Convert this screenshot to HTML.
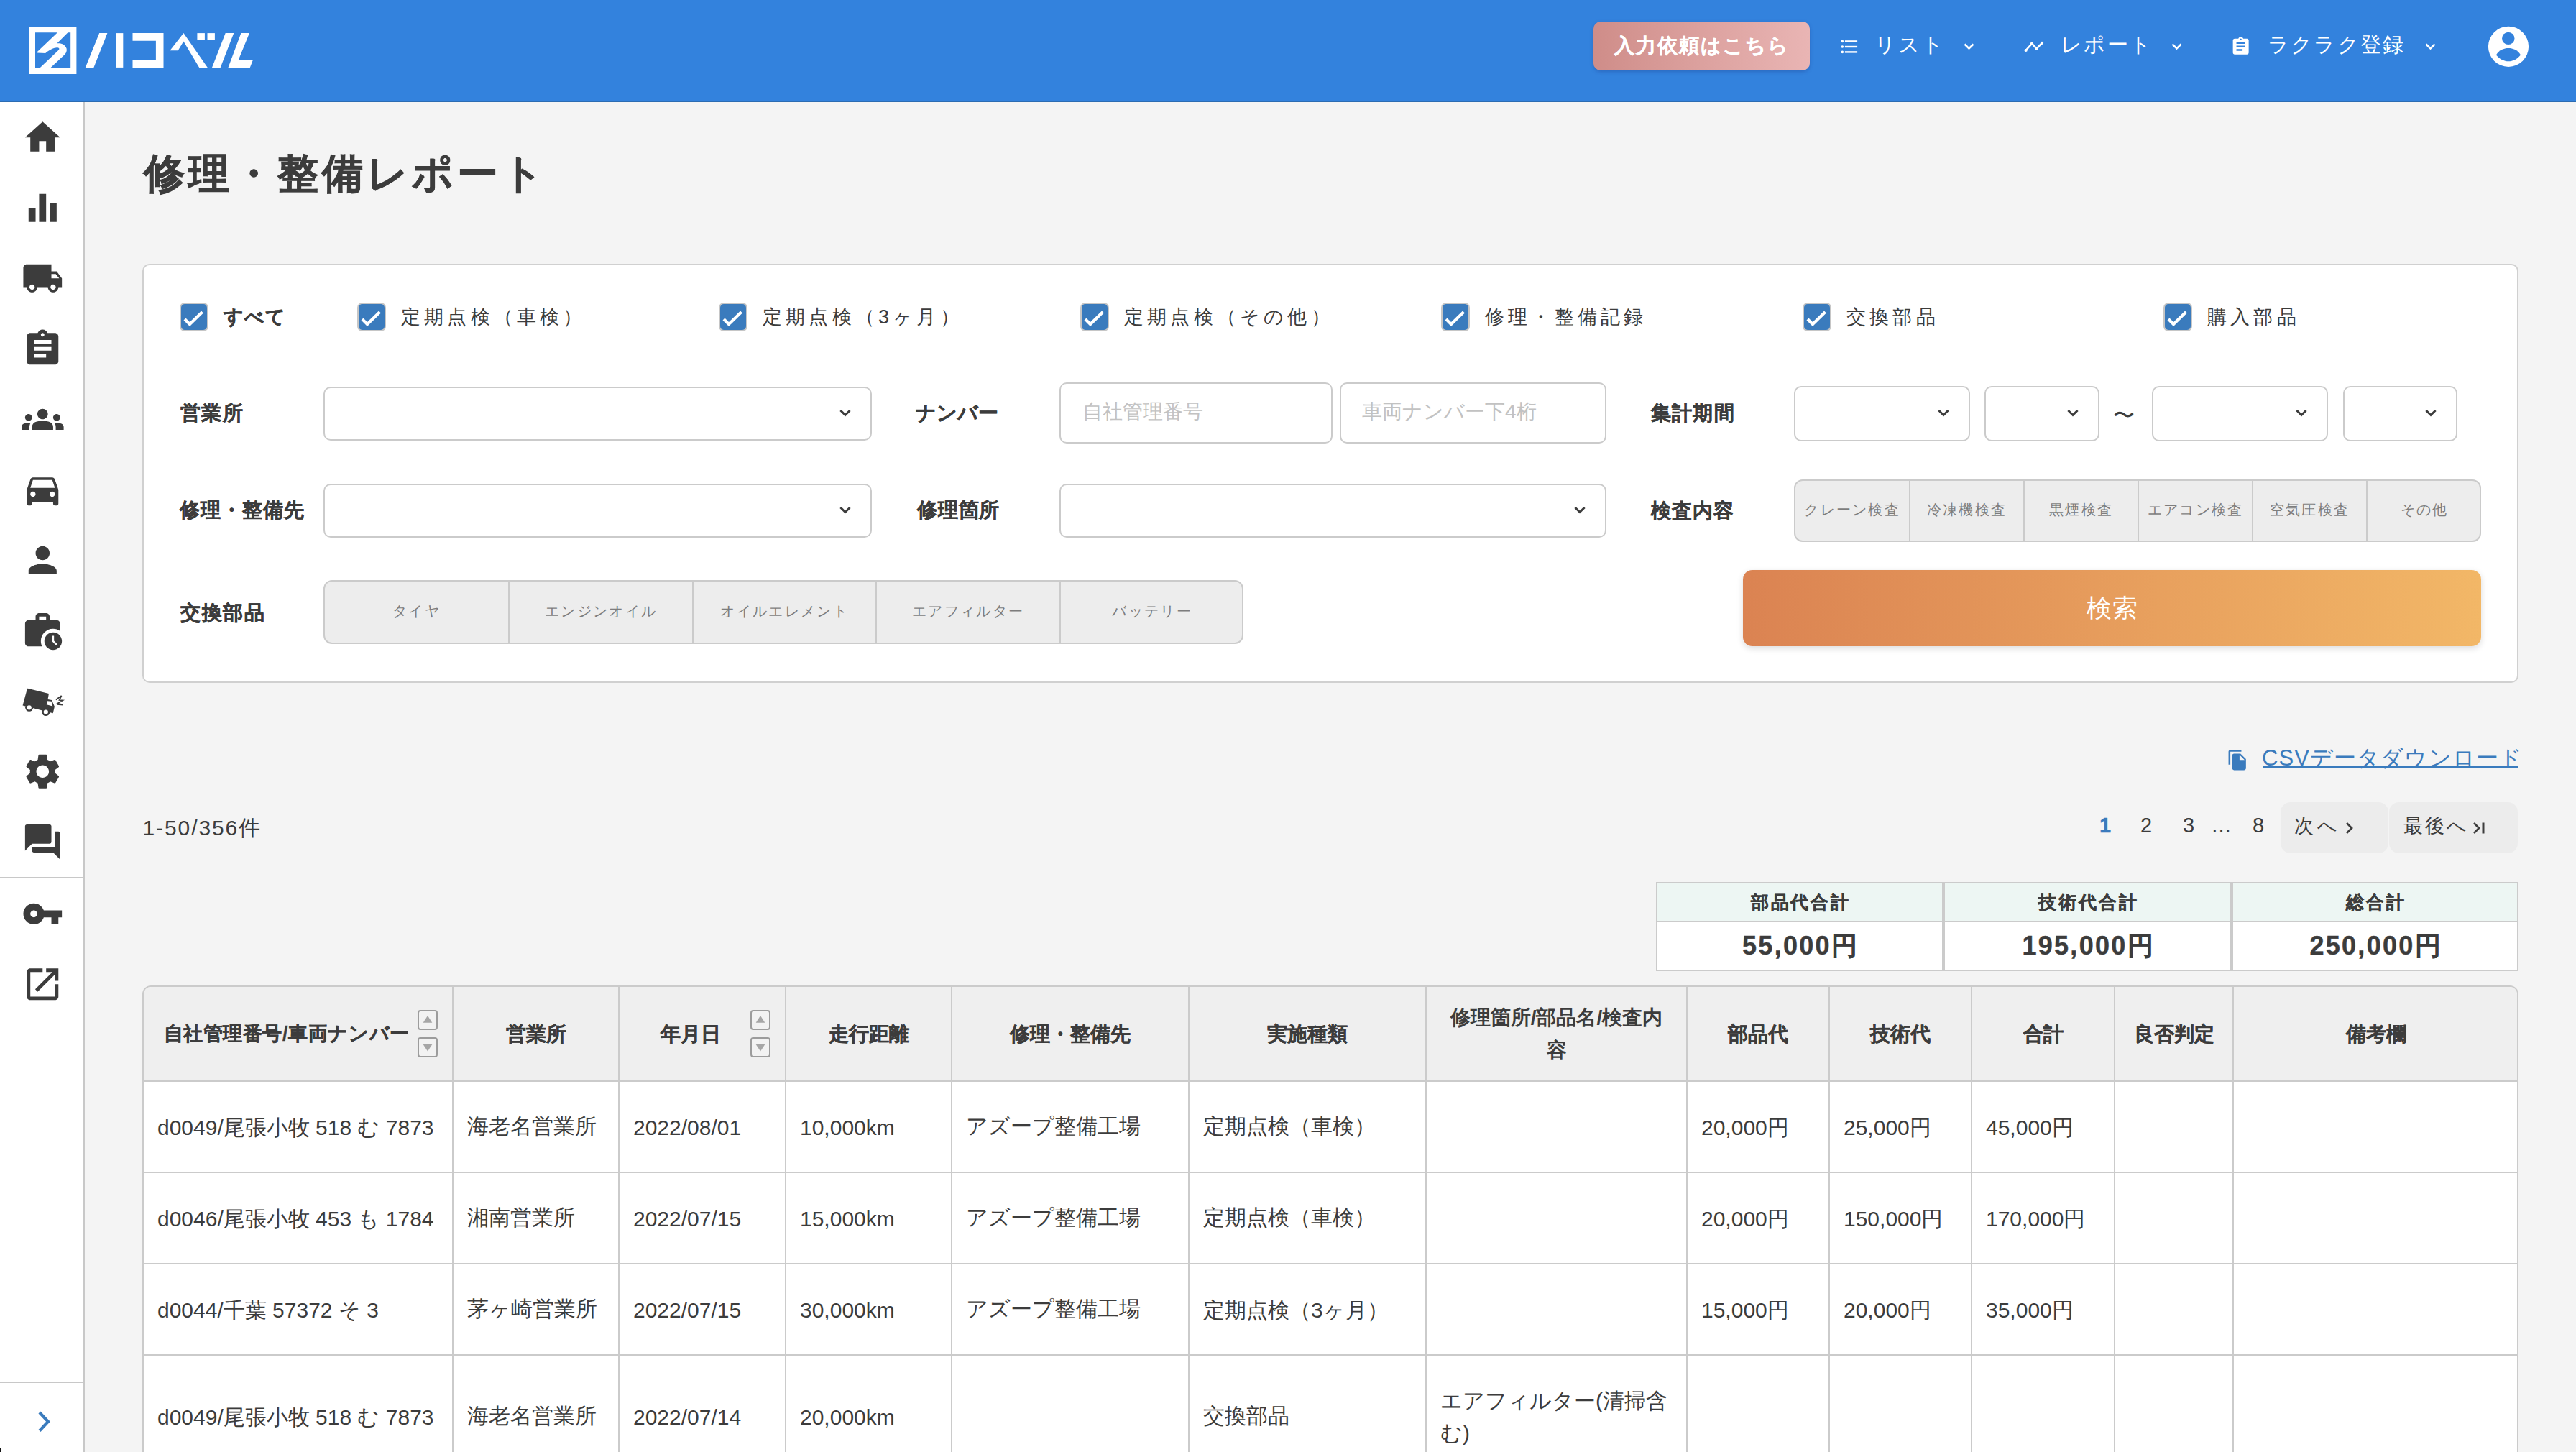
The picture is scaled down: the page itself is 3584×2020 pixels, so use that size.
<!DOCTYPE html>
<html lang="ja"><head><meta charset="utf-8"><title>修理・整備レポート</title>
<style>
*{box-sizing:border-box;margin:0;padding:0}
html,body{width:3584px;height:2020px;overflow:hidden;background:#f4f4f4;font-family:"Liberation Sans",sans-serif;color:#3c3c3c}
.a{position:absolute;white-space:nowrap}
.b{-webkit-text-stroke:0.012em currentColor}
svg.a{overflow:visible}
@media (max-width:1800px){html{zoom:.5}}
</style></head><body>

<div class="a" style="left:0px;top:0px;width:3584px;height:140px;background:#3382dd"></div>
<div class="a" style="left:0px;top:140px;width:3584px;height:2px;background:#2c6cb2"></div>
<svg class="a" style="left:0px;top:0px;" width="400" height="140" viewBox="0 0 400 140"><g fill="#fff">
<path fill-rule="evenodd" d="M40.2,37H106.4V103H40.2ZM49,45.3V94.8H98.2V45.3Z"/>
<path d="M81.3,44 L95.7,44 L79.4,60.3 C85,59.5 91,62 92.6,67.5 C93.5,71 92,74.5 88.3,77.5 L68.5,96 L53.8,96 L81.5,69.7 C83.5,67.5 82,66.2 78.9,66.3 C75,66.5 71,68 63.2,73.9 L52.2,73.4 L51.7,72.3 Z"/>
<polygon points="118.8,93.9 130.4,93.9 149.4,46.1 138.2,46.1"/>
<polygon points="161.0,46.1 171.3,46.1 171.3,93.9 161.0,93.9"/>
<polygon points="184.5,46.1 227.5,46.1 227.5,93.9 184.5,93.9 184.5,83.5 216.9,83.5 216.9,56.7 184.5,56.7"/>
<polygon points="236.5,70.2 255.4,46.1 288.8,93.9 277.2,93.9 255.4,57.5 247.7,70.2"/>
<polygon points="274.4,46.1 284.9,46.1 284.9,55.4 274.4,55.4"/>
<polygon points="288.5,46.1 298.9,46.1 298.9,55.4 288.5,55.4"/>
<polygon points="295.0,93.9 306.7,93.9 325.3,46.1 313.7,46.1"/>
<polygon points="317.5,93.9 347.8,93.9 351.7,83.9 331.5,83.9 347.0,46.1 335.4,46.1"/>
</g></svg>
<div class="a" style="left:2217px;top:30px;width:301px;height:68px;border-radius:10px;background:linear-gradient(90deg,#cf8d89,#e9b5b4);box-shadow:0 2px 5px rgba(30,60,140,.35)"></div>
<div class="a b" style="left:2217px;top:30px;font-size:28px;line-height:68px;color:#fff;font-weight:bold;letter-spacing:2px;width:301px;text-align:center;">入力依頼はこちら</div>
<svg class="a" style="left:2550px;top:40px;" width="60" height="50" viewBox="0 0 60 50"><g fill="#fff"><circle cx="13.3" cy="17.4" r="1.8"/><circle cx="13.3" cy="25" r="1.8"/><circle cx="13.3" cy="32.4" r="1.8"/><rect x="16.9" y="16.2" width="17.2" height="2.4"/><rect x="16.9" y="23.8" width="17.2" height="2.4"/><rect x="16.9" y="31.2" width="17.2" height="2.4"/></g></svg>
<div class="a" style="left:2608px;top:44px;font-size:29px;line-height:36px;color:#fff;font-weight:normal;letter-spacing:3px;">リスト</div>
<svg class="a" style="left:2732px;top:60px;" width="15" height="9" viewBox="0 0 15 9"><polyline points="1.5,1.5 7.5,7.5 13.5,1.5" fill="none" stroke="#fff" stroke-width="2.6"/></svg>
<svg class="a" style="left:2805px;top:40px;" width="60" height="50" viewBox="0 0 60 50"><g fill="#fff" stroke="#fff"><polyline points="13.6,30 22,20.7 28.6,27.6 36,19.8" fill="none" stroke-width="2.6"/><circle cx="13.6" cy="30" r="2.1" stroke="none"/><circle cx="22" cy="20.7" r="2.1" stroke="none"/><circle cx="28.6" cy="27.6" r="2.1" stroke="none"/><circle cx="36" cy="19.8" r="2.1" stroke="none"/></g></svg>
<div class="a" style="left:2867px;top:44px;font-size:29px;line-height:36px;color:#fff;font-weight:normal;letter-spacing:2.3px;">レポート</div>
<svg class="a" style="left:3021px;top:60px;" width="15" height="9" viewBox="0 0 15 9"><polyline points="1.5,1.5 7.5,7.5 13.5,1.5" fill="none" stroke="#fff" stroke-width="2.6"/></svg>
<svg class="a" style="left:3103.3px;top:49.8px;" width="29.3" height="29.3" viewBox="0 0 24 24"><path fill="#fff" d="M19 3h-4.18C14.4 1.84 13.3 1 12 1c-1.3 0-2.4.84-2.82 2H5c-1.1 0-2 .9-2 2v14c0 1.1.9 2 2 2h14c1.1 0 2-.9 2-2V5c0-1.1-.9-2-2-2zm-7 0c.55 0 1 .45 1 1s-.45 1-1 1-1-.45-1-1 .45-1 1-1zm2 14H7v-2h7v2zm3-4H7v-2h10v2zm0-4H7V7h10v2z"/></svg>
<div class="a" style="left:3155px;top:44px;font-size:29px;line-height:36px;color:#fff;font-weight:normal;letter-spacing:2.2px;">ラクラク登録</div>
<svg class="a" style="left:3374px;top:60px;" width="15" height="9" viewBox="0 0 15 9"><polyline points="1.5,1.5 7.5,7.5 13.5,1.5" fill="none" stroke="#fff" stroke-width="2.6"/></svg>
<svg class="a" style="left:3450px;top:25px;" width="80" height="80" viewBox="0 0 80 80"><circle cx="40" cy="39.8" r="28.1" fill="#fff"/><circle cx="39.8" cy="28.4" r="8.7" fill="#3382dd"/><path d="M22.9,51.5 C27,44.5 34,42.1 40,42.1 C46,42.1 53,44.5 57,51.5 C52,57.5 46,60.3 40,60.3 C34,60.3 28,57.5 22.9,51.5Z" fill="#3382dd"/></svg>
<div class="a" style="left:0px;top:142px;width:116px;height:1878px;background:#fff"></div>
<div class="a" style="left:116px;top:142px;width:2px;height:1878px;background:#c8c8c8"></div>
<svg class="a" style="left:30px;top:162px;" width="58.6" height="58.6" viewBox="0 0 24 24"><path fill="#3c3c3c" d="M10 20v-6h4v6h5v-8h3L12 3 2 12h3v8z"/></svg>
<svg class="a" style="left:30px;top:260px;" width="58.6" height="58.6" viewBox="0 0 24 24"><path fill="#3c3c3c" d="M10 20h4V4h-4v16zm-6 0h4v-8H4v8zM16 9v11h4V9h-4z"/></svg>
<svg class="a" style="left:30px;top:358px;" width="58.6" height="58.6" viewBox="0 0 24 24"><path fill="#3c3c3c" d="M20 8h-3V4H3c-1.1 0-2 .9-2 2v11h2c0 1.66 1.34 3 3 3s3-1.34 3-3h6c0 1.66 1.34 3 3 3s3-1.34 3-3h2v-5l-3-4zM6 18.5c-.83 0-1.5-.67-1.5-1.5s.67-1.5 1.5-1.5 1.5.67 1.5 1.5-.67 1.5-1.5 1.5zm13.5-9l1.96 2.5H17V9.5h2.5zm-1.5 9c-.83 0-1.5-.67-1.5-1.5s.67-1.5 1.5-1.5 1.5.67 1.5 1.5-.67 1.5-1.5 1.5z"/></svg>
<svg class="a" style="left:30px;top:456px;" width="58.6" height="58.6" viewBox="0 0 24 24"><path fill="#3c3c3c" d="M19 3h-4.18C14.4 1.84 13.3 1 12 1c-1.3 0-2.4.84-2.82 2H5c-1.1 0-2 .9-2 2v14c0 1.1.9 2 2 2h14c1.1 0 2-.9 2-2V5c0-1.1-.9-2-2-2zm-7 0c.55 0 1 .45 1 1s-.45 1-1 1-1-.45-1-1 .45-1 1-1zm2 14H7v-2h7v2zm3-4H7v-2h10v2zm0-4H7V7h10v2z"/></svg>
<svg class="a" style="left:30px;top:554px;" width="58.6" height="58.6" viewBox="0 0 24 24"><path fill="#3c3c3c" d="M12 12.75c1.63 0 3.07.39 4.24.9 1.08.48 1.76 1.56 1.76 2.73V18H6v-1.61c0-1.18.68-2.26 1.760-2.73 1.17-.52 2.61-.91 4.24-.91zM4 13c1.1 0 2-.9 2-2s-.9-2-2-2-2 .9-2 2 .9 2 2 2zm1.13 1.1c-.37-.06-.74-.1-1.13-.1-.99 0-1.930.21-2.78.58C.48 14.9 0 15.62 0 16.43V18h4.5v-1.61c0-.83.23-1.61.63-2.29zM20 13c1.1 0 2-.9 2-2s-.9-2-2-2-2 .9-2 2 .9 2 2 2zm4 3.43c0-.81-.48-1.53-1.22-1.85-.85-.37-1.79-.58-2.78-.58-.39 0-.76.04-1.13.1.4.68.63 1.46.63 2.29V18H24v-1.57zM12 6c1.66 0 3 1.34 3 3s-1.34 3-3 3-3-1.34-3-3 1.34-3 3-3z"/></svg>
<svg class="a" style="left:30px;top:652px;" width="58.6" height="58.6" viewBox="0 0 24 24"><path fill="#3c3c3c" d="M18.92 6.01C18.72 5.42 18.16 5 17.5 5h-11c-.66 0-1.21.42-1.42 1.01L3 12v8c0 .55.45 1 1 1h1c.55 0 1-.45 1-1v-1h12v1c0 .55.45 1 1 1h1c.55 0 1-.45 1-1v-8l-2.08-5.99zM6.5 16c-.83 0-1.5-.67-1.5-1.5S5.67 13 6.5 13s1.5.67 1.5 1.5S7.33 16 6.5 16zm11 0c-.83 0-1.5-.67-1.5-1.5s.67-1.5 1.5-1.5 1.5.67 1.5 1.5-.67 1.5-1.5 1.5zM5 11l1.5-4.5h11L19 11H5z"/></svg>
<svg class="a" style="left:30px;top:750px;" width="58.6" height="58.6" viewBox="0 0 24 24"><path fill="#3c3c3c" d="M12 12c2.21 0 4-1.79 4-4s-1.79-4-4-4-4 1.79-4 4 1.79 4 4 4zm0 2c-2.67 0-8 1.34-8 4v2h16v-2c0-2.66-5.330-4-8-4z"/></svg>
<svg class="a" style="left:30px;top:848px;" width="58.6" height="58.6" viewBox="0 0 24 24"><path fill="#3c3c3c" d="M18 11c1.49 0 2.87.47 4 1.26V8c0-1.11-.89-2-2-2h-4V4c0-1.11-.89-2-2-2h-4c-1.11 0-2 .89-2 2v2H4c-1.11 0-1.99.89-1.99 2L2 19c0 1.11.89 2 2 2h7.68c-.43-.91-.68-1.92-.68-3 0-3.87 3.13-7 7-7zm-8-7h4v2h-4V4zM18 13c-2.76 0-5 2.24-5 5s2.24 5 5 5 5-2.24 5-5-2.24-5-5-5zm1.65 7.35L17.5 18.2V15h1v2.79l1.85 1.85-.7.71z"/></svg>
<svg class="a" style="left:20px;top:930px;" width="80" height="80" viewBox="0 0 1452 1452"><g fill="#3c3c3c"><path d="M340,505 L870,635 L845,782 L945,800 L1015,962 L975,1132 L210,935 L320,530 Q325,500 340,505Z"/>
<circle cx="375" cy="985" r="100"/><circle cx="795" cy="1100" r="100"/></g>
<circle cx="375" cy="985" r="57" fill="#fff"/><circle cx="795" cy="1100" r="57" fill="#fff"/>
<path d="M832,822 L935,832 L967,955 L812,912Z" fill="#fff"/>
<polyline points="1050,790 1190,690 1135,800 1222,806 1095,880 1228,918 1075,905" fill="none" stroke="#3c3c3c" stroke-width="30" stroke-linejoin="miter"/></svg>
<svg class="a" style="left:30px;top:1044px;" width="58.6" height="58.6" viewBox="0 0 24 24"><path fill="#3c3c3c" d="M19.14 12.94c.04-.3.06-.61.06-.94 0-.32-.02-.64-.07-.94l2.03-1.58c.18-.14.23-.41.12-.61l-1.92-3.32c-.12-.22-.37-.29-.59-.22l-2.39.96c-.5-.38-1.03-.7-1.62-.94l-.36-2.54c-.04-.24-.24-.41-.48-.41h-3.84c-.24 0-.43.17-.47.41l-.36 2.54c-.59.24-1.13.57-1.62.94l-2.39-.96c-.22-.08-.47 0-.59.22L2.74 8.87c-.12.21-.08.47.12.61l2.03 1.58c-.05.3-.09.63-.09.94s.02.64.07.94l-2.03 1.58c-.18.14-.23.41-.12.61l1.92 3.32c.12.22.37.29.59.22l2.39-.96c.5.38 1.03.7 1.62.94l.36 2.54c.05.24.24.41.48.41h3.84c.24 0 .44-.17.47-.41l.36-2.54c.59-.24 1.13-.56 1.62-.94l2.39.96c.22.08.47 0 .59-.22l1.92-3.32c.12-.22.07-.47-.12-.61l-2.01-1.58zM12 15.6c-1.98 0-3.6-1.62-3.6-3.6s1.62-3.6 3.6-3.6 3.6 1.62 3.6 3.6-1.62 3.6-3.6 3.6z"/></svg>
<svg class="a" style="left:30px;top:1142px;" width="58.6" height="58.6" viewBox="0 0 24 24"><path fill="#3c3c3c" d="M21 6h-2v9H6v2c0 .55.45 1 1 1h11l4 4V7c0-.55-.45-1-1-1zm-4 6V3c0-.55-.45-1-1-1H3c-.55 0-1 .45-1 1v14l4-4h10c.55 0 1-.45 1-1z"/></svg>
<div class="a" style="left:0px;top:1220px;width:116px;height:2px;background:#c8c8c8"></div>
<svg class="a" style="left:30px;top:1242px;" width="58.6" height="58.6" viewBox="0 0 24 24"><path fill="#3c3c3c" d="M12.65 10C11.83 7.67 9.61 6 7 6c-3.31 0-6 2.69-6 6s2.69 6 6 6c2.61 0 4.83-1.67 5.65-4H17v4h4v-4h2v-4H12.65zM7 14c-1.1 0-2-.9-2-2s.9-2 2-2 2 .9 2 2-.9 2-2 2z"/></svg>
<svg class="a" style="left:30px;top:1340px;" width="58.6" height="58.6" viewBox="0 0 24 24"><path fill="#3c3c3c" d="M19 19H5V5h7V3H5c-1.11 0-2 .9-2 2v14c0 1.1.89 2 2 2h14c1.1 0 2-.9 2-2v-7h-2v7zM14 3v2h3.59l-9.83 9.83 1.41 1.41L19 6.41V10h2V3h-7z"/></svg>
<div class="a" style="left:0px;top:1922px;width:116px;height:2px;background:#c8c8c8"></div>
<svg class="a" style="left:50px;top:1960px;" width="24" height="36" viewBox="0 0 24 36"><polyline points="5,5 17,17.8 5,30.5" fill="none" stroke="#3a7bbd" stroke-width="4.2"/></svg>
<div class="a b" style="left:200px;top:206.5px;font-size:57px;line-height:68px;color:#3c3c3c;font-weight:bold;letter-spacing:5px;">修理・整備レポート</div>
<div class="a" style="left:198px;top:367px;width:3306px;height:583px;background:#fff;border:2px solid #d0d0d0;border-radius:10px"></div>
<div class="a" style="left:250px;top:421px;width:40px;height:40px;background:#3a7bbd;border:2px solid #c6c6c6;border-radius:7px"></div>
<svg class="a" style="left:250px;top:421px;" width="40" height="40" viewBox="0 0 40 40"><polyline points="7,23 14,30 31.5,13" fill="none" stroke="#fff" stroke-width="4.2"/></svg>
<div class="a b" style="left:311px;top:423px;font-size:27px;line-height:36px;color:#3c3c3c;font-weight:bold;letter-spacing:1px;">すべて</div>
<div class="a" style="left:497px;top:421px;width:40px;height:40px;background:#3a7bbd;border:2px solid #c6c6c6;border-radius:7px"></div>
<svg class="a" style="left:497px;top:421px;" width="40" height="40" viewBox="0 0 40 40"><polyline points="7,23 14,30 31.5,13" fill="none" stroke="#fff" stroke-width="4.2"/></svg>
<div class="a" style="left:558px;top:423px;font-size:27px;line-height:36px;color:#3c3c3c;font-weight:normal;letter-spacing:5.2px;">定期点検（車検）</div>
<div class="a" style="left:1000px;top:421px;width:40px;height:40px;background:#3a7bbd;border:2px solid #c6c6c6;border-radius:7px"></div>
<svg class="a" style="left:1000px;top:421px;" width="40" height="40" viewBox="0 0 40 40"><polyline points="7,23 14,30 31.5,13" fill="none" stroke="#fff" stroke-width="4.2"/></svg>
<div class="a" style="left:1061px;top:423px;font-size:27px;line-height:36px;color:#3c3c3c;font-weight:normal;letter-spacing:5.2px;">定期点検（3ヶ月）</div>
<div class="a" style="left:1503px;top:421px;width:40px;height:40px;background:#3a7bbd;border:2px solid #c6c6c6;border-radius:7px"></div>
<svg class="a" style="left:1503px;top:421px;" width="40" height="40" viewBox="0 0 40 40"><polyline points="7,23 14,30 31.5,13" fill="none" stroke="#fff" stroke-width="4.2"/></svg>
<div class="a" style="left:1564px;top:423px;font-size:27px;line-height:36px;color:#3c3c3c;font-weight:normal;letter-spacing:5.2px;">定期点検（その他）</div>
<div class="a" style="left:2005px;top:421px;width:40px;height:40px;background:#3a7bbd;border:2px solid #c6c6c6;border-radius:7px"></div>
<svg class="a" style="left:2005px;top:421px;" width="40" height="40" viewBox="0 0 40 40"><polyline points="7,23 14,30 31.5,13" fill="none" stroke="#fff" stroke-width="4.2"/></svg>
<div class="a" style="left:2066px;top:423px;font-size:27px;line-height:36px;color:#3c3c3c;font-weight:normal;letter-spacing:5.2px;">修理・整備記録</div>
<div class="a" style="left:2508px;top:421px;width:40px;height:40px;background:#3a7bbd;border:2px solid #c6c6c6;border-radius:7px"></div>
<svg class="a" style="left:2508px;top:421px;" width="40" height="40" viewBox="0 0 40 40"><polyline points="7,23 14,30 31.5,13" fill="none" stroke="#fff" stroke-width="4.2"/></svg>
<div class="a" style="left:2569px;top:423px;font-size:27px;line-height:36px;color:#3c3c3c;font-weight:normal;letter-spacing:5.2px;">交換部品</div>
<div class="a" style="left:3010px;top:421px;width:40px;height:40px;background:#3a7bbd;border:2px solid #c6c6c6;border-radius:7px"></div>
<svg class="a" style="left:3010px;top:421px;" width="40" height="40" viewBox="0 0 40 40"><polyline points="7,23 14,30 31.5,13" fill="none" stroke="#fff" stroke-width="4.2"/></svg>
<div class="a" style="left:3071px;top:423px;font-size:27px;line-height:36px;color:#3c3c3c;font-weight:normal;letter-spacing:5.2px;">購入部品</div>
<div class="a b" style="left:251.4px;top:556px;font-size:28px;line-height:38px;color:#3c3c3c;font-weight:bold;letter-spacing:1.1px;">営業所</div>
<div class="a" style="left:450px;top:538px;width:763px;height:75px;background:#fff;border:2px solid #cbcbcb;border-radius:10px"></div>
<svg class="a" style="left:1168px;top:569.0px;" width="16" height="13" viewBox="0 0 16 13"><polyline points="2.5,3 8,8.5 13.5,3" fill="none" stroke="#3c3c3c" stroke-width="3" stroke-linecap="square"/></svg>
<div class="a b" style="left:1274px;top:556px;font-size:28px;line-height:38px;color:#3c3c3c;font-weight:bold;letter-spacing:0px;">ナンバー</div>
<div class="a" style="left:1474px;top:532px;width:380px;height:85px;background:#fff;border:2px solid #cbcbcb;border-radius:10px"></div>
<div class="a" style="left:1506px;top:554px;font-size:28px;line-height:38px;color:#c2c2c2;font-weight:normal;letter-spacing:0px;">自社管理番号</div>
<div class="a" style="left:1864px;top:532px;width:371px;height:85px;background:#fff;border:2px solid #cbcbcb;border-radius:10px"></div>
<div class="a" style="left:1895px;top:554px;font-size:28px;line-height:38px;color:#c2c2c2;font-weight:normal;letter-spacing:0px;">車両ナンバー下4桁</div>
<div class="a b" style="left:2297px;top:556px;font-size:28px;line-height:38px;color:#3c3c3c;font-weight:bold;letter-spacing:1.2px;">集計期間</div>
<div class="a" style="left:2496px;top:537px;width:245px;height:77px;background:#fff;border:2px solid #cbcbcb;border-radius:10px"></div>
<svg class="a" style="left:2696px;top:569.0px;" width="16" height="13" viewBox="0 0 16 13"><polyline points="2.5,3 8,8.5 13.5,3" fill="none" stroke="#3c3c3c" stroke-width="3" stroke-linecap="square"/></svg>
<div class="a" style="left:2761px;top:537px;width:160px;height:77px;background:#fff;border:2px solid #cbcbcb;border-radius:10px"></div>
<svg class="a" style="left:2876px;top:569.0px;" width="16" height="13" viewBox="0 0 16 13"><polyline points="2.5,3 8,8.5 13.5,3" fill="none" stroke="#3c3c3c" stroke-width="3" stroke-linecap="square"/></svg>
<div class="a" style="left:2940px;top:558px;font-size:30px;line-height:40px;color:#3c3c3c;font-weight:normal;letter-spacing:0px;">〜</div>
<div class="a" style="left:2994px;top:537px;width:245px;height:77px;background:#fff;border:2px solid #cbcbcb;border-radius:10px"></div>
<svg class="a" style="left:3194px;top:569.0px;" width="16" height="13" viewBox="0 0 16 13"><polyline points="2.5,3 8,8.5 13.5,3" fill="none" stroke="#3c3c3c" stroke-width="3" stroke-linecap="square"/></svg>
<div class="a" style="left:3260px;top:537px;width:159px;height:77px;background:#fff;border:2px solid #cbcbcb;border-radius:10px"></div>
<svg class="a" style="left:3374px;top:569.0px;" width="16" height="13" viewBox="0 0 16 13"><polyline points="2.5,3 8,8.5 13.5,3" fill="none" stroke="#3c3c3c" stroke-width="3" stroke-linecap="square"/></svg>
<div class="a b" style="left:250px;top:691px;font-size:28px;line-height:38px;color:#3c3c3c;font-weight:bold;letter-spacing:1px;">修理・整備先</div>
<div class="a" style="left:450px;top:673px;width:763px;height:75px;background:#fff;border:2px solid #cbcbcb;border-radius:10px"></div>
<svg class="a" style="left:1168px;top:704.0px;" width="16" height="13" viewBox="0 0 16 13"><polyline points="2.5,3 8,8.5 13.5,3" fill="none" stroke="#3c3c3c" stroke-width="3" stroke-linecap="square"/></svg>
<div class="a b" style="left:1276px;top:691px;font-size:28px;line-height:38px;color:#3c3c3c;font-weight:bold;letter-spacing:0.8px;">修理箇所</div>
<div class="a" style="left:1474px;top:673px;width:761px;height:75px;background:#fff;border:2px solid #cbcbcb;border-radius:10px"></div>
<svg class="a" style="left:2190px;top:704.0px;" width="16" height="13" viewBox="0 0 16 13"><polyline points="2.5,3 8,8.5 13.5,3" fill="none" stroke="#3c3c3c" stroke-width="3" stroke-linecap="square"/></svg>
<div class="a b" style="left:2297px;top:692px;font-size:28px;line-height:38px;color:#3c3c3c;font-weight:bold;letter-spacing:1px;">検査内容</div>
<div class="a" style="left:2496px;top:667px;width:956px;height:87px;background:#ededed;border:2px solid #cbcbcb;border-radius:12px"></div>
<div class="a" style="left:2656px;top:667px;width:2px;height:87px;background:#cbcbcb"></div>
<div class="a" style="left:2815px;top:667px;width:2px;height:87px;background:#cbcbcb"></div>
<div class="a" style="left:2974px;top:667px;width:2px;height:87px;background:#cbcbcb"></div>
<div class="a" style="left:3133px;top:667px;width:2px;height:87px;background:#cbcbcb"></div>
<div class="a" style="left:3292px;top:667px;width:2px;height:87px;background:#cbcbcb"></div>
<div class="a" style="left:2496px;top:665.5px;font-size:20px;line-height:87px;color:#7d7d7d;font-weight:normal;letter-spacing:2.3px;width:160px;text-align:center;padding-left:2.3px;">クレーン検査</div>
<div class="a" style="left:2656px;top:665.5px;font-size:20px;line-height:87px;color:#7d7d7d;font-weight:normal;letter-spacing:2.3px;width:159px;text-align:center;padding-left:2.3px;">冷凍機検査</div>
<div class="a" style="left:2815px;top:665.5px;font-size:20px;line-height:87px;color:#7d7d7d;font-weight:normal;letter-spacing:2.3px;width:159px;text-align:center;padding-left:2.3px;">黒煙検査</div>
<div class="a" style="left:2974px;top:665.5px;font-size:20px;line-height:87px;color:#7d7d7d;font-weight:normal;letter-spacing:2.3px;width:159px;text-align:center;padding-left:2.3px;">エアコン検査</div>
<div class="a" style="left:3133px;top:665.5px;font-size:20px;line-height:87px;color:#7d7d7d;font-weight:normal;letter-spacing:2.3px;width:159px;text-align:center;padding-left:2.3px;">空気圧検査</div>
<div class="a" style="left:3292px;top:665.5px;font-size:20px;line-height:87px;color:#7d7d7d;font-weight:normal;letter-spacing:2.3px;width:160px;text-align:center;padding-left:2.3px;">その他</div>
<div class="a b" style="left:251px;top:834px;font-size:28px;line-height:38px;color:#3c3c3c;font-weight:bold;letter-spacing:1.5px;">交換部品</div>
<div class="a" style="left:450px;top:807px;width:1280px;height:89px;background:#ededed;border:2px solid #cbcbcb;border-radius:12px"></div>
<div class="a" style="left:707px;top:807px;width:2px;height:89px;background:#cbcbcb"></div>
<div class="a" style="left:963px;top:807px;width:2px;height:89px;background:#cbcbcb"></div>
<div class="a" style="left:1218px;top:807px;width:2px;height:89px;background:#cbcbcb"></div>
<div class="a" style="left:1474px;top:807px;width:2px;height:89px;background:#cbcbcb"></div>
<div class="a" style="left:450px;top:805.5px;font-size:20px;line-height:89px;color:#7d7d7d;font-weight:normal;letter-spacing:2.3px;width:257px;text-align:center;padding-left:2.3px;">タイヤ</div>
<div class="a" style="left:707px;top:805.5px;font-size:20px;line-height:89px;color:#7d7d7d;font-weight:normal;letter-spacing:2.3px;width:256px;text-align:center;padding-left:2.3px;">エンジンオイル</div>
<div class="a" style="left:963px;top:805.5px;font-size:20px;line-height:89px;color:#7d7d7d;font-weight:normal;letter-spacing:2.3px;width:255px;text-align:center;padding-left:2.3px;">オイルエレメント</div>
<div class="a" style="left:1218px;top:805.5px;font-size:20px;line-height:89px;color:#7d7d7d;font-weight:normal;letter-spacing:2.3px;width:256px;text-align:center;padding-left:2.3px;">エアフィルター</div>
<div class="a" style="left:1474px;top:805.5px;font-size:20px;line-height:89px;color:#7d7d7d;font-weight:normal;letter-spacing:2.3px;width:256px;text-align:center;padding-left:2.3px;">バッテリー</div>
<div class="a" style="left:2425px;top:793px;width:1027px;height:106px;border-radius:13px;background:linear-gradient(90deg,#db8352,#f2b767);box-shadow:0 3px 10px rgba(0,0,0,.14)"></div>
<div class="a" style="left:2425px;top:793px;font-size:35px;line-height:106px;color:#fff;font-weight:normal;letter-spacing:1.5px;width:1027px;text-align:center;padding-left:1.5px">検索</div>
<svg class="a" style="left:3098.1px;top:1041.5px;" width="30.7" height="30.7" viewBox="0 0 24 24"><path fill="#3a7bbd" d="M16 1H4c-1.1 0-2 .9-2 2v14h2V3h12V1zm-1 4l6 6v10c0 1.1-.9 2-2 2H7.99C6.89 23 6 22.1 6 21l.01-14c0-1.1.89-2 1.99-2h7zm-1 7h5.5L14 6.5V12z"/></svg>
<div class="a" style="left:3147px;top:1036px;font-size:31px;line-height:38px;color:#3a7bbd;font-weight:normal;letter-spacing:1.1px;">CSVデータダウンロード</div>
<div class="a" style="left:3149px;top:1066px;width:355px;height:3px;background:#3a7bbd"></div>
<div class="a" style="left:198.5px;top:1134px;font-size:30px;line-height:36px;color:#3c3c3c;font-weight:normal;letter-spacing:1.9px;">1-50/356件</div>
<div class="a b" style="left:2921px;top:1130px;font-size:29px;line-height:36px;color:#3a7bbd;font-weight:bold;letter-spacing:0px;">1</div>
<div class="a" style="left:2978px;top:1130px;font-size:29px;line-height:36px;color:#3c3c3c;font-weight:normal;letter-spacing:0px;">2</div>
<div class="a" style="left:3037px;top:1130px;font-size:29px;line-height:36px;color:#3c3c3c;font-weight:normal;letter-spacing:0px;">3</div>
<div class="a" style="left:3076px;top:1130px;font-size:29px;line-height:36px;color:#3c3c3c;font-weight:normal;letter-spacing:0px;">…</div>
<div class="a" style="left:3134px;top:1130px;font-size:29px;line-height:36px;color:#3c3c3c;font-weight:normal;letter-spacing:0px;">8</div>
<div class="a" style="left:3173px;top:1116px;width:150px;height:71px;background:#ececec;border-radius:14px"></div>
<div class="a" style="left:3192px;top:1131px;font-size:27px;line-height:36px;color:#3c3c3c;font-weight:normal;letter-spacing:4.7px;">次へ</div>
<svg class="a" style="left:3262px;top:1143px;" width="14" height="18" viewBox="0 0 14 18"><polyline points="3,2 10,9 3,16" fill="none" stroke="#3c3c3c" stroke-width="2.7"/></svg>
<div class="a" style="left:3324px;top:1116px;width:179px;height:71px;background:#ececec;border-radius:14px"></div>
<div class="a" style="left:3343.8px;top:1131px;font-size:27px;line-height:36px;color:#3c3c3c;font-weight:normal;letter-spacing:3px;">最後へ</div>
<svg class="a" style="left:3440px;top:1143px;" width="18" height="18" viewBox="0 0 18 18"><polyline points="2,2 9,9 2,16" fill="none" stroke="#3c3c3c" stroke-width="2.7"/><rect x="13.5" y="1.5" width="3" height="15" fill="#3c3c3c"/></svg>
<div class="a" style="left:2304px;top:1227px;width:1200px;height:124px;background:#fff;border:2px solid #cbcbcb"></div>
<div class="a" style="left:2306px;top:1229px;width:1196px;height:53px;background:#edf6f3"></div>
<div class="a" style="left:2304px;top:1281px;width:1200px;height:2px;background:#cbcbcb"></div>
<div class="a" style="left:2702px;top:1227px;width:4px;height:124px;background:#cbcbcb"></div>
<div class="a" style="left:3103px;top:1227px;width:4px;height:124px;background:#cbcbcb"></div>
<div class="a b" style="left:2306px;top:1229px;font-size:25px;line-height:52px;color:#3c3c3c;font-weight:bold;letter-spacing:2.9px;width:396px;text-align:center;padding-left:2.9px;">部品代合計</div>
<div class="a b" style="left:2306px;top:1283px;font-size:36px;line-height:66px;color:#3c3c3c;font-weight:bold;letter-spacing:2.3px;width:396px;text-align:center;padding-left:2.3px;">55,000円</div>
<div class="a b" style="left:2706px;top:1229px;font-size:25px;line-height:52px;color:#3c3c3c;font-weight:bold;letter-spacing:2.9px;width:397px;text-align:center;padding-left:2.9px;">技術代合計</div>
<div class="a b" style="left:2706px;top:1283px;font-size:36px;line-height:66px;color:#3c3c3c;font-weight:bold;letter-spacing:2.3px;width:397px;text-align:center;padding-left:2.3px;">195,000円</div>
<div class="a b" style="left:3107px;top:1229px;font-size:25px;line-height:52px;color:#3c3c3c;font-weight:bold;letter-spacing:2.9px;width:395px;text-align:center;padding-left:2.9px;">総合計</div>
<div class="a b" style="left:3107px;top:1283px;font-size:36px;line-height:66px;color:#3c3c3c;font-weight:bold;letter-spacing:2.3px;width:395px;text-align:center;padding-left:2.3px;">250,000円</div>
<div class="a" style="left:198px;top:1371px;width:3306px;height:669px;background:#fff;border:2px solid #cbcbcb;border-radius:12px 12px 0 0"></div>
<div class="a" style="left:200px;top:1373px;width:3302px;height:130px;background:#efefef;border-radius:10px 10px 0 0"></div>
<div class="a" style="left:629px;top:1371px;width:2px;height:649px;background:#cbcbcb"></div>
<div class="a" style="left:860px;top:1371px;width:2px;height:649px;background:#cbcbcb"></div>
<div class="a" style="left:1092px;top:1371px;width:2px;height:649px;background:#cbcbcb"></div>
<div class="a" style="left:1323px;top:1371px;width:2px;height:649px;background:#cbcbcb"></div>
<div class="a" style="left:1653px;top:1371px;width:2px;height:649px;background:#cbcbcb"></div>
<div class="a" style="left:1983px;top:1371px;width:2px;height:649px;background:#cbcbcb"></div>
<div class="a" style="left:2346px;top:1371px;width:2px;height:649px;background:#cbcbcb"></div>
<div class="a" style="left:2544px;top:1371px;width:2px;height:649px;background:#cbcbcb"></div>
<div class="a" style="left:2742px;top:1371px;width:2px;height:649px;background:#cbcbcb"></div>
<div class="a" style="left:2941px;top:1371px;width:2px;height:649px;background:#cbcbcb"></div>
<div class="a" style="left:3106px;top:1371px;width:2px;height:649px;background:#cbcbcb"></div>
<div class="a" style="left:198px;top:1503px;width:3306px;height:2px;background:#cbcbcb"></div>
<div class="a" style="left:198px;top:1630px;width:3306px;height:2px;background:#cbcbcb"></div>
<div class="a" style="left:198px;top:1757px;width:3306px;height:2px;background:#cbcbcb"></div>
<div class="a" style="left:198px;top:1884px;width:3306px;height:2px;background:#cbcbcb"></div>
<div class="a b" style="left:227.5px;top:1415.5px;font-size:27px;line-height:45px;color:#3c3c3c;font-weight:bold;letter-spacing:0.6px;">自社管理番号/車両ナンバー</div>
<div class="a b" style="left:631px;top:1415.5px;font-size:28px;line-height:45px;color:#3c3c3c;font-weight:bold;letter-spacing:0px;width:229px;text-align:center;">営業所</div>
<div class="a b" style="left:919px;top:1415.5px;font-size:28px;line-height:45px;color:#3c3c3c;font-weight:bold;letter-spacing:0px;">年月日</div>
<div class="a b" style="left:1094px;top:1415.5px;font-size:28px;line-height:45px;color:#3c3c3c;font-weight:bold;letter-spacing:0px;width:229px;text-align:center;">走行距離</div>
<div class="a b" style="left:1325px;top:1415.5px;font-size:28px;line-height:45px;color:#3c3c3c;font-weight:bold;letter-spacing:0px;width:328px;text-align:center;">修理・整備先</div>
<div class="a b" style="left:1655px;top:1415.5px;font-size:28px;line-height:45px;color:#3c3c3c;font-weight:bold;letter-spacing:0px;width:328px;text-align:center;">実施種類</div>
<div class="a" style="left:1985px;top:1393.0px;width:361px;text-align:center;font-size:28px;line-height:45px;font-weight:bold;white-space:normal">修理箇所/部品名/検査内<br>容</div>
<div class="a b" style="left:2348px;top:1415.5px;font-size:28px;line-height:45px;color:#3c3c3c;font-weight:bold;letter-spacing:0px;width:196px;text-align:center;">部品代</div>
<div class="a b" style="left:2546px;top:1415.5px;font-size:28px;line-height:45px;color:#3c3c3c;font-weight:bold;letter-spacing:0px;width:196px;text-align:center;">技術代</div>
<div class="a b" style="left:2744px;top:1415.5px;font-size:28px;line-height:45px;color:#3c3c3c;font-weight:bold;letter-spacing:0px;width:197px;text-align:center;">合計</div>
<div class="a b" style="left:2943px;top:1415.5px;font-size:28px;line-height:45px;color:#3c3c3c;font-weight:bold;letter-spacing:0px;width:163px;text-align:center;">良否判定</div>
<div class="a b" style="left:3108px;top:1415.5px;font-size:28px;line-height:45px;color:#3c3c3c;font-weight:bold;letter-spacing:0px;width:396px;text-align:center;">備考欄</div>
<div class="a" style="left:581px;top:1405px;width:28px;height:28px;background:#f2f2f2;border:2px solid #9c9c9c;border-radius:4px"></div>
<svg class="a" style="left:581px;top:1405px;" width="28" height="28" viewBox="0 0 28 28"><polygon points="7.7,17.8 14,8 20.3,17.8" fill="#a6a6a6"/></svg>
<div class="a" style="left:581px;top:1443px;width:28px;height:28px;background:#f2f2f2;border:2px solid #9c9c9c;border-radius:4px"></div>
<svg class="a" style="left:581px;top:1443px;" width="28" height="28" viewBox="0 0 28 28"><polygon points="7.7,10 14,19.6 20.3,10" fill="#a6a6a6"/></svg>
<div class="a" style="left:1044px;top:1405px;width:28px;height:28px;background:#f2f2f2;border:2px solid #9c9c9c;border-radius:4px"></div>
<svg class="a" style="left:1044px;top:1405px;" width="28" height="28" viewBox="0 0 28 28"><polygon points="7.7,17.8 14,8 20.3,17.8" fill="#a6a6a6"/></svg>
<div class="a" style="left:1044px;top:1443px;width:28px;height:28px;background:#f2f2f2;border:2px solid #9c9c9c;border-radius:4px"></div>
<svg class="a" style="left:1044px;top:1443px;" width="28" height="28" viewBox="0 0 28 28"><polygon points="7.7,10 14,19.6 20.3,10" fill="#a6a6a6"/></svg>
<div class="a" style="left:219px;top:1545.5px;font-size:30px;line-height:45px;color:#3c3c3c;font-weight:normal;letter-spacing:0px;">d0049/尾張小牧 518 む 7873</div>
<div class="a" style="left:650px;top:1543.5px;font-size:30px;line-height:45px;color:#3c3c3c;font-weight:normal;letter-spacing:0px;">海老名営業所</div>
<div class="a" style="left:881px;top:1545.5px;font-size:30px;line-height:45px;color:#3c3c3c;font-weight:normal;letter-spacing:0px;">2022/08/01</div>
<div class="a" style="left:1113px;top:1545.5px;font-size:30px;line-height:45px;color:#3c3c3c;font-weight:normal;letter-spacing:0px;">10,000km</div>
<div class="a" style="left:1344px;top:1543.5px;font-size:30px;line-height:45px;color:#3c3c3c;font-weight:normal;letter-spacing:0px;">アズープ整備工場</div>
<div class="a" style="left:1674px;top:1543.5px;font-size:30px;line-height:45px;color:#3c3c3c;font-weight:normal;letter-spacing:0px;">定期点検（車検）</div>
<div class="a" style="left:2367px;top:1545.5px;font-size:30px;line-height:45px;color:#3c3c3c;font-weight:normal;letter-spacing:0px;">20,000円</div>
<div class="a" style="left:2565px;top:1545.5px;font-size:30px;line-height:45px;color:#3c3c3c;font-weight:normal;letter-spacing:0px;">25,000円</div>
<div class="a" style="left:2763px;top:1545.5px;font-size:30px;line-height:45px;color:#3c3c3c;font-weight:normal;letter-spacing:0px;">45,000円</div>
<div class="a" style="left:219px;top:1672.5px;font-size:30px;line-height:45px;color:#3c3c3c;font-weight:normal;letter-spacing:0px;">d0046/尾張小牧 453 も 1784</div>
<div class="a" style="left:650px;top:1670.5px;font-size:30px;line-height:45px;color:#3c3c3c;font-weight:normal;letter-spacing:0px;">湘南営業所</div>
<div class="a" style="left:881px;top:1672.5px;font-size:30px;line-height:45px;color:#3c3c3c;font-weight:normal;letter-spacing:0px;">2022/07/15</div>
<div class="a" style="left:1113px;top:1672.5px;font-size:30px;line-height:45px;color:#3c3c3c;font-weight:normal;letter-spacing:0px;">15,000km</div>
<div class="a" style="left:1344px;top:1670.5px;font-size:30px;line-height:45px;color:#3c3c3c;font-weight:normal;letter-spacing:0px;">アズープ整備工場</div>
<div class="a" style="left:1674px;top:1670.5px;font-size:30px;line-height:45px;color:#3c3c3c;font-weight:normal;letter-spacing:0px;">定期点検（車検）</div>
<div class="a" style="left:2367px;top:1672.5px;font-size:30px;line-height:45px;color:#3c3c3c;font-weight:normal;letter-spacing:0px;">20,000円</div>
<div class="a" style="left:2565px;top:1672.5px;font-size:30px;line-height:45px;color:#3c3c3c;font-weight:normal;letter-spacing:0px;">150,000円</div>
<div class="a" style="left:2763px;top:1672.5px;font-size:30px;line-height:45px;color:#3c3c3c;font-weight:normal;letter-spacing:0px;">170,000円</div>
<div class="a" style="left:219px;top:1799.5px;font-size:30px;line-height:45px;color:#3c3c3c;font-weight:normal;letter-spacing:0px;">d0044/千葉 57372 そ 3</div>
<div class="a" style="left:650px;top:1797.5px;font-size:30px;line-height:45px;color:#3c3c3c;font-weight:normal;letter-spacing:0px;">茅ヶ崎営業所</div>
<div class="a" style="left:881px;top:1799.5px;font-size:30px;line-height:45px;color:#3c3c3c;font-weight:normal;letter-spacing:0px;">2022/07/15</div>
<div class="a" style="left:1113px;top:1799.5px;font-size:30px;line-height:45px;color:#3c3c3c;font-weight:normal;letter-spacing:0px;">30,000km</div>
<div class="a" style="left:1344px;top:1797.5px;font-size:30px;line-height:45px;color:#3c3c3c;font-weight:normal;letter-spacing:0px;">アズープ整備工場</div>
<div class="a" style="left:1674px;top:1799.5px;font-size:30px;line-height:45px;color:#3c3c3c;font-weight:normal;letter-spacing:0px;">定期点検（3ヶ月）</div>
<div class="a" style="left:2367px;top:1799.5px;font-size:30px;line-height:45px;color:#3c3c3c;font-weight:normal;letter-spacing:0px;">15,000円</div>
<div class="a" style="left:2565px;top:1799.5px;font-size:30px;line-height:45px;color:#3c3c3c;font-weight:normal;letter-spacing:0px;">20,000円</div>
<div class="a" style="left:2763px;top:1799.5px;font-size:30px;line-height:45px;color:#3c3c3c;font-weight:normal;letter-spacing:0px;">35,000円</div>
<div class="a" style="left:219px;top:1948.5px;font-size:30px;line-height:45px;color:#3c3c3c;font-weight:normal;letter-spacing:0px;">d0049/尾張小牧 518 む 7873</div>
<div class="a" style="left:650px;top:1946.5px;font-size:30px;line-height:45px;color:#3c3c3c;font-weight:normal;letter-spacing:0px;">海老名営業所</div>
<div class="a" style="left:881px;top:1948.5px;font-size:30px;line-height:45px;color:#3c3c3c;font-weight:normal;letter-spacing:0px;">2022/07/14</div>
<div class="a" style="left:1113px;top:1948.5px;font-size:30px;line-height:45px;color:#3c3c3c;font-weight:normal;letter-spacing:0px;">20,000km</div>
<div class="a" style="left:1674px;top:1946.5px;font-size:30px;line-height:45px;color:#3c3c3c;font-weight:normal;letter-spacing:0px;">交換部品</div>
<div class="a" style="left:2004px;top:1926px;font-size:30px;line-height:45px;color:#3c3c3c">エアフィルター(清掃含<br>む)</div>
<div class="a" style="left:0px;top:2014px;width:1px;height:6px;background:#111"></div>
</body></html>
